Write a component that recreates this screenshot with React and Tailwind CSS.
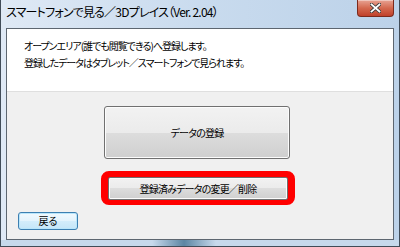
import React from "react";

const jp = "font-['Noto_Sans_CJK_JP','Noto_Sans',sans-serif] [font-feature-settings:'palt']";

export default function App() {
  return (
    <div className={`w-[400px] h-[247px] bg-[#f0f0f0] ${jp} text-black`}>
      {/* window frame */}
      <div className="w-full h-full flex flex-col border-x border-b border-[#414c58] bg-linear-to-r from-[#dfe9f5] via-[#c9dbee] to-[#bcd2e9]">
        {/* Title bar */}
        <div className="h-[28px] flex items-start justify-between">
          <div className="pl-[5px] pt-[4px] text-[12px] leading-[16px] tracking-[-0.8px] text-black">
            スマートフォンで見る／3Dプレイス（Ver. 2.04）
          </div>
          <div className="mr-[5px] w-[37px] h-[17px] rounded-b-[4px] border border-t-0 border-[#7c2a1c] bg-linear-to-b from-[#e7a393] via-[#d4694f] to-[#c0402a] flex items-center justify-center shadow-[inset_0_1px_0_rgba(255,255,255,0.4)]">
            <svg width="11" height="10" viewBox="0 0 11 10">
              <path d="M1.5 1.5 L9.5 8.5 M9.5 1.5 L1.5 8.5" stroke="#3b3b3b" strokeWidth="3.6" strokeLinecap="square" />
              <path d="M1.5 1.5 L9.5 8.5 M9.5 1.5 L1.5 8.5" stroke="#ffffff" strokeWidth="1.8" strokeLinecap="square" />
            </svg>
          </div>
        </div>

        {/* Client area */}
        <div className="mx-[5px] flex-1 flex flex-col border border-[#5d6670] bg-[#f0f0f0]">
          <div className="h-[63px] bg-white border-b border-[#dfdfdf] pl-[17px] pt-[8px] text-[10px] leading-[17px] tracking-[-1px]">
            <div>オープンエリア(誰でも閲覧できる)へ登録します。</div>
            <div>登録したデータはタブレット／スマートフォンで見られます。</div>
          </div>

          <div className="flex-1 flex flex-col items-start">
            <button className="ml-[97px] mt-[14px] w-[186px] h-[53px] rounded-[3px] border border-[#707070] bg-[linear-gradient(to_bottom,#f2f2f2_0%,#ebebeb_50%,#dddddd_50%,#cfcfcf_100%)] text-[10px] tracking-[-0.8px] leading-none flex items-center justify-center shadow-[inset_0_0_0_1px_#fcfcfc]">
              データの登録
            </button>

            <div className="ml-[94px] mt-[12px] w-[194px] h-[34px] rounded-[8px] border-x-[7px] border-t-[6px] border-b-[5px] border-[#ff0000] bg-[#ff0000]">
              <button className="w-full h-full rounded-[2px] border border-[#707070] bg-[linear-gradient(to_bottom,#f2f2f2_0%,#ebebeb_50%,#dddddd_50%,#cfcfcf_100%)] text-[10px] tracking-[-0.8px] leading-none flex items-center justify-center shadow-[inset_0_0_0_1px_#fcfcfc]">
                登録済みデータの変更／削除
              </button>
            </div>

            <button className="ml-[11px] mt-[7px] w-[60px] h-[18px] rounded-[3px] border border-[#3c7fb1] bg-[linear-gradient(to_bottom,#f1f9fe_0%,#e3f3fc_50%,#d3edfb_50%,#c5e6f8_100%)] text-[10px] leading-none flex items-center justify-center shadow-[inset_0_0_0_1px_#b9e6fb]">
              戻る
            </button>
          </div>
        </div>

        {/* bottom frame */}
        <div className="h-[6px] bg-[linear-gradient(to_right,#c7d9ec_0%,#c7d9ec_38%,#5d86a3_46%,#c7d9ec_54%,#c7d9ec_100%)]" />
      </div>
    </div>
  );
}
